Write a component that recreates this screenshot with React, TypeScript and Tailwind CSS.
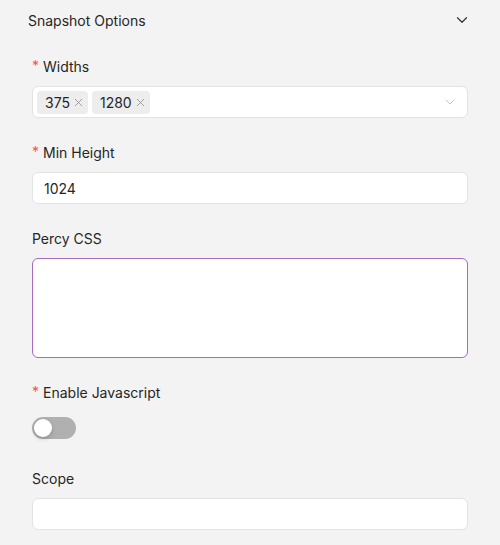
import { ChevronDown, X } from 'lucide-react'

const FONT = "font-['Inter','Noto_Sans',sans-serif]"

function Label({ text, required }: { text: string; required?: boolean }) {
  return (
    <div className="mb-[9px] flex h-[22px] items-center text-[14px] text-[#262626]">
      {required && <span className="mr-[4px] text-[14px] leading-none text-[#ff4d4f]">*</span>}
      {text}
    </div>
  )
}

function Tag({ value }: { value: string }) {
  return (
    <span className="flex h-[23px] items-center gap-[2px] rounded-[4px] bg-[#ededed] pl-[8px] pr-[3px] text-[14px] text-[#262626]">
      {value}
      <X className="h-[13px] w-[13px] text-[#8c8c8c]" strokeWidth={1.5} />
    </span>
  )
}

export default function App() {
  return (
    <div className={`${FONT} min-h-[545px] w-full bg-[#f3f3f3]`}>
      <div className="flex h-[40px] items-center justify-between pl-[28px] pr-[29px]">
        <span className="text-[14px] text-[#262626]">Snapshot Options</span>
        <ChevronDown className="h-[18px] w-[18px] text-[#333]" strokeWidth={1.6} />
      </div>

      <div className="flex flex-col gap-[23px] px-[32px] pt-[15px]">
        <div>
          <Label text="Widths" required />
          <div className="flex h-[32px] items-center justify-between rounded-[6px] border border-[#e3e3e3] bg-white pl-[4px] pr-[9px]">
            <div className="flex gap-[4px]">
              <Tag value="375" />
              <Tag value="1280" />
            </div>
            <ChevronDown className="h-[16px] w-[16px] text-[#bfbfbf]" strokeWidth={1.4} />
          </div>
        </div>

        <div>
          <Label text="Min Height" required />
          <div className="flex h-[32px] items-center rounded-[6px] border border-[#e3e3e3] bg-white px-[11px] text-[14px] text-[#262626]">
            1024
          </div>
        </div>

        <div>
          <Label text="Percy CSS" />
          <div className="h-[100px] rounded-[6px] border border-[#a56cc1] bg-white" />
        </div>

        <div>
          <Label text="Enable Javascript" required />
          <div className="flex h-[32px] items-center">
            <div className="flex h-[22px] w-[44px] items-center rounded-full bg-[#b0b0b0] px-[2px]">
              <div className="h-[18px] w-[18px] rounded-full bg-white shadow-[0_2px_4px_rgba(0,35,11,0.2)]" />
            </div>
          </div>
        </div>

        <div>
          <Label text="Scope" />
          <div className="h-[32px] rounded-[6px] border border-[#e3e3e3] bg-white" />
        </div>
      </div>
    </div>
  )
}
